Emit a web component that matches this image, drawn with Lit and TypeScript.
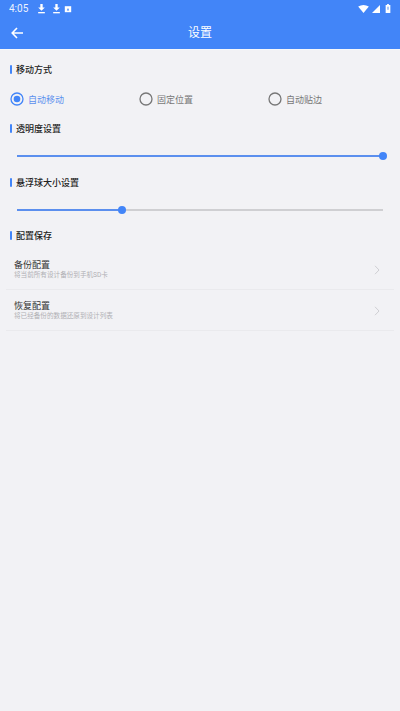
import { LitElement, html, css, svg } from "lit";
import { customElement } from "lit/decorators.js";

const dl = svg`<svg class="si" viewBox="0 0 10 12" width="9" height="10"><path d="M3.6 0h2.8v4.2H9L5 8.2 1 4.2h2.6z" fill="#fff"/><rect x="1" y="9.6" width="8" height="1.6" fill="#fff"/></svg>`;

@customElement("app-root")
export class AppRoot extends LitElement {
  static styles = css`
    :host { display: block; width: 400px; height: 711px; background: #f2f2f5; overflow: hidden;
      font-family: "Roboto", "Noto Sans CJK SC", sans-serif; }
    .head { height: 49px; background: #4285f8; color: #fff; border-bottom: 1px solid #f7f8fb; }
    .status { height: 17px; display: flex; align-items: center; padding: 0 9px; gap: 6px; }
    .time { font-size: 10px; opacity: .9; margin-right: 3px; }
    .si { display: block; }
    .si.box { margin-left: -3px; }
    .sright { margin-left: auto; display: flex; align-items: center; gap: 3px; }
    .sright .cell { margin-right: 2px; }
    .bar { height: 32px; display: flex; align-items: center; justify-content: center; position: relative; }
    .back { position: absolute; left: 11px; top: 10px; }
    .title { font-size: 12px; line-height: 20px; margin-top: -1px; }
    .content { display: flex; flex-direction: column; padding-top: 11px; }
    .sec { display: flex; align-items: center; gap: 4px; height: 16px; padding-left: 10px;
      font-size: 9px; font-weight: 500; color: #222; }
    .sec i { width: 2px; height: 9px; background: #4285f8; border-radius: 1px; }
    .radios { display: grid; grid-template-columns: 129px 129px 1fr; padding: 13px 0 0 10px; height: 18px; margin-bottom: 12px; }
    .radio { display: flex; align-items: center; gap: 4px; font-size: 9px; color: #777; }
    .radio.on { color: #5b8fee; }
    .slider { padding: 18px 17px 0; height: 5px; margin-bottom: 15px; }
    .slider.tight { margin-bottom: 14px; }
    .track { position: relative; height: 2px; background: #cfcfd2; width: 366px; margin-top: 1px; }
    .fill { height: 100%; background: #5b8fee; }
    .thumb { position: absolute; top: -3px; width: 8px; height: 8px; margin-left: -4px; border-radius: 50%; background: #4285f8; }
    .rows { padding: 0 6px; margin-top: 6px; }
    .row { height: 41px; box-sizing: border-box; border-bottom: 1px solid #eaeaed; display: flex; align-items: center;
      justify-content: space-between; padding: 1px 14px 0 8px; }
    .row b { display: block; font-weight: 400; font-size: 9px; line-height: 11px; color: #333; }
    .row span { display: block; font-size: 6.6px; line-height: 9px; color: #b0b0b4; }
  `;

  private radio(label: string, on: boolean) {
    return html`<div class="radio ${on ? "on" : ""}">
      <svg width="14" height="14" viewBox="0 0 14 14">
        <circle cx="7" cy="7" r="6" fill="none" stroke="${on ? "#4285f8" : "#777"}" stroke-width="1.3"/>
        ${on ? svg`<circle cx="7" cy="7" r="3.3" fill="#4285f8"/>` : ""}
      </svg>${label}</div>`;
  }
  private slider(p: number, tight = false) {
    return html`<div class="slider ${tight ? "tight" : ""}"><div class="track">
      <div class="fill" style="width:${p}%"></div>
      <div class="thumb" style="left:${p}%"></div>
    </div></div>`;
  }
  private row(t: string, s: string) {
    return html`<div class="row"><div><b>${t}</b><span>${s}</span></div>
      <svg width="6" height="10" viewBox="0 0 6 10"><path d="M1 .8 5 5 1 9.2" fill="none" stroke="#cfcfd3" stroke-width="1"/></svg></div>`;
  }
  render() {
    return html`
      <div class="head">
        <div class="status">
          <span class="time">4:05</span>
          ${dl}${dl}
          <svg class="si box" viewBox="0 0 10 10" width="8" height="8"><path d="M1 1.5h8v7.5H1z" fill="#fff"/><path d="M3.5 6.8 5 3.6l1.5 3.2z" fill="#4285f8"/></svg>
          <div class="sright">
            <svg class="si" viewBox="0 0 12 9" width="11" height="8"><path d="M0 1.8Q6-1.6 12 1.8L6 9z" fill="#fff"/></svg>
            <svg class="si cell" viewBox="0 0 9 9" width="8" height="8"><path d="M9 0v9H0z" fill="#fff"/></svg>
            <svg class="si" viewBox="0 0 6 10" width="6" height="9"><path d="M2 0h2v1h1.6v9H.4V1H2z" fill="#fff"/><rect x="2" y="3" width="2" height="3.4" fill="#4285f8" opacity=".5"/></svg>
          </div>
        </div>
        <div class="bar">
          <svg class="back" width="12" height="12" viewBox="0 0 12 12"><path d="M6 1 1.2 6 6 11M1.4 6H12" fill="none" stroke="#fff" stroke-width="1.6"/></svg>
          <span class="title">设置</span>
        </div>
      </div>
      <div class="content">
        <div class="sec"><i></i>移动方式</div>
        <div class="radios">
          ${this.radio("自动移动", true)}${this.radio("固定位置", false)}${this.radio("自动贴边", false)}
        </div>
        <div class="sec"><i></i>透明度设置</div>
        ${this.slider(100)}
        <div class="sec"><i></i>悬浮球大小设置</div>
        ${this.slider(28.7, true)}
        <div class="sec"><i></i>配置保存</div>
        <div class="rows">
          ${this.row("备份配置", "将当前所有设计备份到手机SD卡")}
          ${this.row("恢复配置", "将已经备份的数据还原到设计列表")}
        </div>
      </div>
    `;
  }
}
